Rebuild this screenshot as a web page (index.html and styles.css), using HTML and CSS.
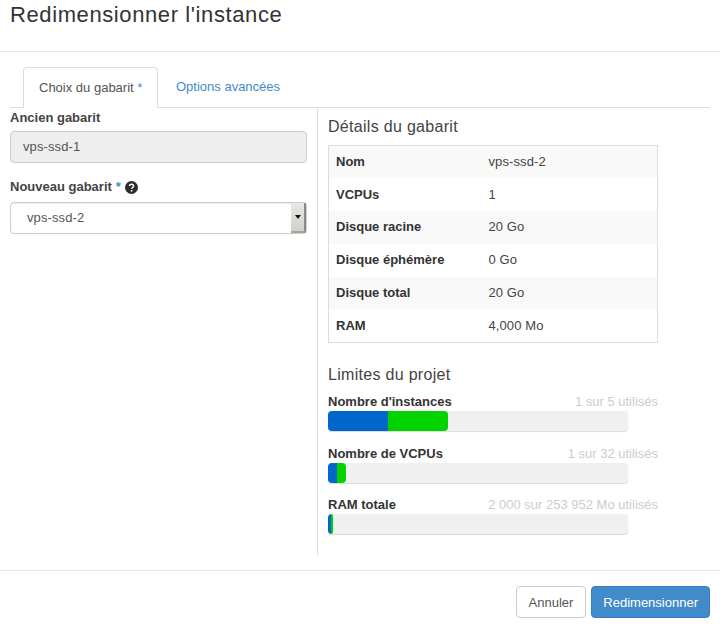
FILE: index.html
```html
<!DOCTYPE html>
<html lang="fr">
<head>
    <meta charset="UTF-8">
    <title>Redimensionner l'instance</title>
    <link rel="stylesheet" href="styles.css">
</head>
<body>
    <div class="modal-header">
        <h3>Redimensionner l'instance</h3>
    </div>
    <div class="modal-body">
        <ul class="tabs">
            <li class="active">Choix du gabarit <span class="req">*</span></li>
            <li>Options avancées</li>
        </ul>
        <div class="columns">
            <div class="col-left">
                <label class="first">Ancien gabarit</label>
                <div class="input disabled">vps-ssd-1</div>
                <label>Nouveau gabarit <span class="req">*</span>
                    <svg class="help" width="13" height="13" viewBox="0 0 13 13">
                        <circle cx="6.5" cy="6.5" r="6.5" fill="#2b2b2b"/>
                        <path d="M4.4 5.1c0-1.2 1-1.9 2.1-1.9s2.1.7 2.1 1.8c0 1.6-2 1.5-2 2.8" fill="none" stroke="#fff" stroke-width="1.5"/>
                        <rect x="5.8" y="9" width="1.6" height="1.6" fill="#fff"/>
                    </svg>
                </label>
                <div class="input select">
                    <span>vps-ssd-2</span>
                    <span class="select-btn"><i></i></span>
                </div>
            </div>
            <div class="col-right">
                <h4>Détails du gabarit</h4>
                <table class="details">
                    <tr><th>Nom</th><td>vps-ssd-2</td></tr>
                    <tr><th>VCPUs</th><td>1</td></tr>
                    <tr><th>Disque racine</th><td>20 Go</td></tr>
                    <tr><th>Disque éphémère</th><td>0 Go</td></tr>
                    <tr><th>Disque total</th><td>20 Go</td></tr>
                    <tr><th>RAM</th><td>4,000 Mo</td></tr>
                </table>
                <h4 class="limits">Limites du projet</h4>
                <div class="quota">
                    <div class="quota-head"><b>Nombre d'instances</b><span>1 sur 5 utilisés</span></div>
                    <div class="bar"><div class="used" style="width:60px"></div><div class="added" style="width:60px"></div></div>
                </div>
                <div class="quota">
                    <div class="quota-head"><b>Nombre de VCPUs</b><span>1 sur 32 utilisés</span></div>
                    <div class="bar"><div class="used" style="width:9px"></div><div class="added" style="width:9px"></div></div>
                </div>
                <div class="quota">
                    <div class="quota-head"><b>RAM totale</b><span>2 000 sur 253 952 Mo utilisés</span></div>
                    <div class="bar"><div class="used" style="width:3px"></div><div class="added" style="width:2px"></div></div>
                </div>
            </div>
        </div>
    </div>
    <div class="modal-footer">
        <button class="btn">Annuler</button>
        <button class="btn primary">Redimensionner</button>
    </div>
</body>
</html>
```

FILE: styles.css
```css
*{
    margin:0;
    padding:0;
    box-sizing:border-box;
}
body{
    width:720px;
    height:625px;
    overflow:hidden;
    background:#fff;
    font-family:"Liberation Sans",Arial,sans-serif;
    font-size:13px;
    line-height:18px;
    color:#333;
}
ul{
    list-style:none;
}
.modal-header{
    height:52px;
    padding:0 10px;
    border-bottom:1px solid #e5e5e5;
}
.modal-header h3{
    font-size:22px;
    font-weight:400;
    line-height:29px;
    letter-spacing:.6px;
    color:#333;
}
.modal-body{
    padding:15px 10px 0;
    height:518px;
}
.tabs{
    display:flex;
    height:41px;
    padding-left:13px;
    border-bottom:1px solid #ddd;
}
.tabs li{
    height:41px;
    padding:0 16px;
    line-height:40px;
    white-space:nowrap;
    color:#428bca;
}
.tabs li.active{
    width:135px;
    color:#555;
    background:#fff;
    border:1px solid #ddd;
    border-bottom-color:#fff;
    border-radius:4px 4px 0 0;
    padding:0 0 0 15px;
    margin-right:2px;
}
.req{
    color:#428bca;
}
.columns{
    display:flex;
    height:447px;
}
.col-left{
    width:298px;
    margin-right:9px;
}
.col-right{
    flex:1;
    padding-left:10px;
    border-left:1px solid #ddd;
}
label{
    display:flex;
    align-items:center;
    gap:4px;
    font-weight:700;
    color:#444;
    margin-top:15px;
    height:18px;
    margin-bottom:6px;
}
label.first{
    margin-top:1px;
    margin-bottom:4px;
}
.input{
    width:297px;
    height:32px;
    line-height:30px;
    padding:0 12px;
    border:1px solid #ccc;
    border-radius:4px;
    letter-spacing:.1px;
    color:#555;
}
.disabled{
    background:#eee;
}
.select{
    display:flex;
    justify-content:space-between;
    padding:0 0 0 16px;
    box-shadow:inset 0 1px 1px rgba(0,0,0,.08);
}
.select-btn{
    width:15px;
    height:30px;
    background:linear-gradient(#e8e8e4,#cfcfcb);
    border-right:2px solid #8a8a86;
    border-bottom:2px solid #a5a5a0;
    display:flex;
    align-items:center;
    justify-content:center;
}
.select-btn i{
    border:3.5px solid transparent;
    border-top:4px solid #111;
    border-bottom:0;
}
h4{
    font-size:16px;
    font-weight:400;
    line-height:20px;
    letter-spacing:.3px;
    color:#444;
    margin-top:9px;
    margin-bottom:8px;
}
.details{
    width:330px;
    border-collapse:collapse;
    border:1px solid #ddd;
}
.details tr{
    height:32.8px;
}
.details tr:nth-child(odd){
    background:#f9f9f9;
}
.details th{
    width:160px;
    text-align:left;
    padding-left:7px;
    color:#333;
}
.details td{
    letter-spacing:.1px;
    color:#444;
}
.limits{
    margin-top:22px;
    margin-bottom:8px;
}
.quota{
    margin-bottom:13.75px;
}
.quota-head{
    display:flex;
    justify-content:space-between;
    width:330px;
    height:18px;
}
.quota-head b{
    color:#333;
}
.quota-head span{
    color:#ccc;
}
.bar{
    display:flex;
    width:300px;
    height:20px;
    background:#f0f0f0;
    border-radius:4px;
    overflow:hidden;
    box-shadow:0 1px 1px rgba(0,0,0,.15);
}
.used{
    background:#0066cc;
}
.added{
    background:#00d300;
    border-radius:0 4px 4px 0;
}
.modal-footer{
    display:flex;
    justify-content:flex-end;
    gap:5px;
    height:55px;
    padding:15px 10px 0;
    border-top:1px solid #e5e5e5;
}
.btn{
    height:32px;
    padding:0 12px;
    font-family:inherit;
    font-size:13px;
    color:#555;
    background:#fff;
    border:1px solid #ccc;
    border-radius:4px;
}
.btn.primary{
    padding:0 11px;
    color:#fff;
    background:#428bca;
    border-color:#357ebd;
}
```
